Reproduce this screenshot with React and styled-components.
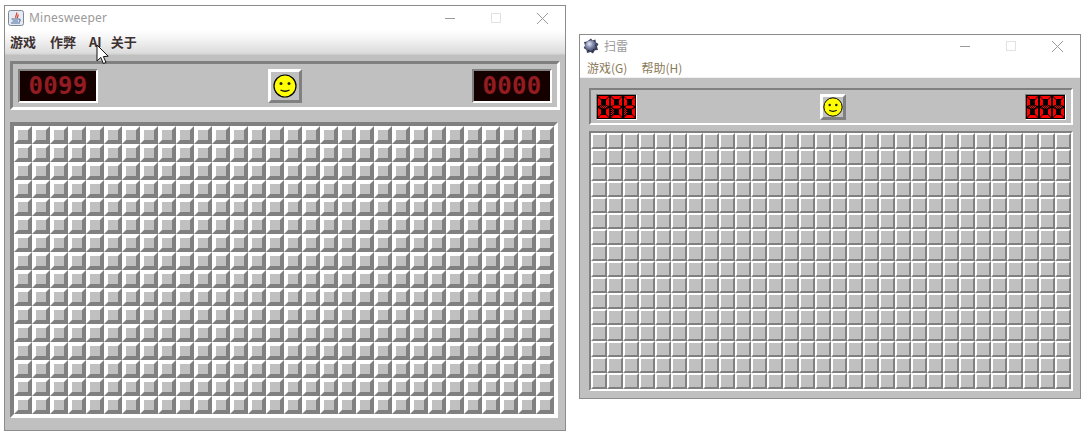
import React from 'react'
import styled, { createGlobalStyle } from 'styled-components'

const Global = createGlobalStyle`
  html, body { margin: 0; padding: 0; background: #fff; }
  body { width: 1085px; height: 436px; overflow: hidden; font-family: "Liberation Sans", "Noto Sans CJK SC", sans-serif; }
`

const Page = styled.div`
  position: relative;
  display: flex;
  align-items: flex-start;
  gap: 13px;
  padding-left: 4px;
  width: 1085px;
  height: 436px;
  box-sizing: border-box;
`

const Window = styled.div`
  box-sizing: border-box;
  width: ${p => p.$w}px;
  height: ${p => p.$h}px;
  margin-top: ${p => p.$top}px;
  border: 1px solid #8c8c8c;
  background: #c0c0c0;
  display: flex;
  flex-direction: column;
`

const TitleBar = styled.div`
  box-sizing: border-box;
  height: ${p => p.$h}px;
  padding: 0 0 ${p => p.$lift}px 3px;
  background: #fff;
  display: flex;
  align-items: center;
  flex-shrink: 0;
`

const AppIcon = styled.svg`
  width: 16px;
  height: 16px;
  flex-shrink: 0;
`

const Title = styled.span`
  margin: 0 0 ${p => p.$cjk ? 0 : 2}px 5px;
  font-family: ${p => p.$cjk ? '"Noto Sans CJK SC", sans-serif' : '"Noto Sans", sans-serif'};
  font-size: 12px;
  letter-spacing: ${p => p.$cjk ? 0 : '0.2px'};
  color: #9a9a9a;
`

const Controls = styled.div`
  margin-left: auto;
  display: flex;
  align-items: center;
`

const Ctl = styled.svg`
  width: 46px;
  height: 14px;
  stroke: ${p => p.$dim ? '#e2e2e2' : '#9b9b9b'};
  fill: none;
`

const JavaMenu = styled.div`
  box-sizing: border-box;
  height: 25px;
  padding: 0 0 2px 5px;
  flex-shrink: 0;
  display: flex;
  align-items: center;
  gap: 14px;
  background: linear-gradient(#ffffff, #f4f4f4 35%, #dcdcdc 92%, #c8c8c8);
`

const JavaMenuItem = styled.span`
  font-family: "Noto Sans CJK SC", sans-serif;
  font-size: 13px;
  font-weight: 700;
  color: #3c3030;
  margin-left: ${p => p.$ml || 0}px;
`

const WinMenu = styled.div`
  box-sizing: border-box;
  height: 18px;
  padding: 0 0 2px 7px;
  flex-shrink: 0;
  display: flex;
  align-items: center;
  gap: 14px;
  background: #fff;
  border-bottom: 1px solid #f0f0f0;
`

const WinMenuItem = styled.span`
  font-family: "Noto Sans CJK SC", sans-serif;
  font-size: 12px;
  color: #8a7a58;
`

const Body = styled.div`
  flex: 1;
  display: flex;
  flex-direction: column;
  gap: ${p => p.$gap}px;
  padding: ${p => p.$pad};
`

const Bevel = styled.div`
  box-sizing: border-box;
  border-style: solid;
  border-width: ${p => p.$bw}px;
  border-color: #808080 #ffffff #ffffff #808080;
`

const Panel = styled(Bevel)`
  height: ${p => p.$h}px;
  display: flex;
  align-items: center;
  justify-content: space-between;
  padding: 0 ${p => p.$pad}px;
`

const JavaCounter = styled(Bevel)`
  width: 80px;
  height: 34px;
  background: #150000;
  color: #931c22;
  font-family: "DejaVu Sans Mono", monospace;
  font-weight: 700;
  font-size: 24px;
  letter-spacing: 0.3px;
  display: flex;
  align-items: center;
  justify-content: center;
`

const LedBox = styled.svg`
  display: block;
  box-sizing: border-box;
  width: 41px;
  height: 26px;
  border: 1px solid;
  border-color: #808080 #fff #fff #808080;
`

const SmileButton = styled.div`
  box-sizing: border-box;
  width: ${p => p.$size}px;
  height: ${p => p.$size}px;
  margin-left: ${p => p.$shift || 0}px;
  background: #c0c0c0;
  border-style: solid;
  border-width: 3px;
  border-color: #ffffff #808080 #808080 #ffffff;
  display: flex;
  align-items: center;
  justify-content: center;
`

const Grid = styled(Bevel)`
  display: grid;
  grid-template-columns: repeat(30, ${p => p.$cell}px);
  grid-auto-rows: ${p => p.$cell}px;
  width: max-content;
`

const JavaCell = styled.div`
  box-sizing: border-box;
  border-style: solid;
  border-width: 4px;
  border-color: #ffffff #808080 #808080 #ffffff;
  background: #c0c0c0;
`

const WinCell = styled.div`
  box-sizing: border-box;
  border-style: solid;
  border-width: 2px;
  border-color: #ffffff #808080 #808080 #ffffff;
  background: #c0c0c0;
`

const Cursor = styled.svg`
  position: absolute;
  left: 96px;
  top: 44px;
  width: 13px;
  height: 21px;
`

const Smiley = ({ size }) => (
  <svg width={size} height={size} viewBox="0 0 24 24">
    <circle cx="12" cy="12" r="11" fill="#ffff00" stroke="#000" strokeWidth="1.2" />
    <circle cx="8" cy="9.5" r="1.5" fill="#222" />
    <circle cx="16" cy="9.5" r="1.5" fill="#222" />
    <path d="M7.5 16 Q12 18.5 16.5 16" fill="none" stroke="#111" strokeWidth="1.4" />
  </svg>
)

const SEG = {
  a: '1,1 12,1 9,4 4,4',
  b: '12,2 9,5 9,10 12,11',
  c: '12,13 9,14.5 9,19 12,22',
  d: '1,23 12,23 9,20 4,20',
  e: '1,13 4,14.5 4,19 1,22',
  f: '1,2 4,5 4,10 1,11',
  g: '2,12 4,10.5 9,10.5 11,12 9,13.5 4,13.5',
}

const LedDigit = ({ x, hatch, pat }) => (
  <g transform={`translate(${x} 0)`}>
    {Object.keys(SEG).map(k => (
      <polygon key={k} points={SEG[k]} fill={hatch.includes(k) ? `url(#${pat})` : '#ff0000'} />
    ))}
  </g>
)

const Led = ({ id, digits }) => (
  <LedBox viewBox="0 0 39 24">
    <defs>
      <pattern id={id} width="2" height="2" patternUnits="userSpaceOnUse">
        <rect width="2" height="2" fill="#000" />
        <rect width="1" height="1" fill="#ff0000" />
        <rect x="1" y="1" width="1" height="1" fill="#ff0000" />
      </pattern>
    </defs>
    <rect width="39" height="24" fill="#000" />
    {digits.map((h, i) => <LedDigit key={i} x={i * 13} hatch={h} pat={id} />)}
  </LedBox>
)

const JavaIcon = () => (
  <AppIcon viewBox="0 0 16 16">
    <rect x="0.5" y="0.5" width="15" height="15" rx="2" fill="#e6eaf2" stroke="#7d8796" />
    <path d="M8.5 2.5 C10 4.5 6.5 5.5 8 8 M10 4.5 C10.5 6 9 6.5 9.5 8" stroke="#d8402a" strokeWidth="1.2" fill="none" />
    <path d="M3.5 9 H11 M4.5 11 H10 M3 13 H12 M11 9 Q13.5 10 11 11.5" stroke="#4a6a9a" strokeWidth="1.1" fill="none" />
  </AppIcon>
)

const MineIcon = () => (
  <AppIcon viewBox="0 0 16 16">
    <defs>
      <radialGradient id="mine-ball" cx="0.38" cy="0.32" r="0.75">
        <stop offset="0" stopColor="#e4e8f4" />
        <stop offset="0.45" stopColor="#7d86ac" />
        <stop offset="1" stopColor="#2c3048" />
      </radialGradient>
    </defs>
    <path d="M8 0.5 L9.5 2.5 L12.5 1.5 L12.8 4.2 L15.5 6 L14 8.5 L15 12 L11.8 12.2 L10 15.5 L7.5 14 L4 15 L3.5 12 L0.7 10 L2 7.5 L1 4 L4 3.5 Z" fill="#3a3e58" />
    <circle cx="7.8" cy="8" r="5.8" fill="url(#mine-ball)" />
    <path d="M5 12 l1 1 M10 11 l1 1 M12 7 l1 0.5 M9 12.5 l0.5 1" stroke="#24283c" strokeWidth="1" />
  </AppIcon>
)

const WindowControls = () => (
  <Controls>
    <Ctl viewBox="0 0 46 14"><path d="M18 7.5 H28" /></Ctl>
    <Ctl viewBox="0 0 46 14" $dim><rect x="18.5" y="2.5" width="9" height="9" /></Ctl>
    <Ctl viewBox="0 0 46 14"><path d="M18 2 L29 13 M29 2 L18 13" /></Ctl>
  </Controls>
)

const cells = Array.from({ length: 480 })

export default function App() {
  return (
    <Page>
      <Global />
      <Window $w={562} $h={426} $top={5}>
        <TitleBar $h={24} $lift={0}>
          <JavaIcon />
          <Title>Minesweeper</Title>
          <WindowControls />
        </TitleBar>
        <JavaMenu>
          <JavaMenuItem>游戏</JavaMenuItem>
          <JavaMenuItem>作弊</JavaMenuItem>
          <JavaMenuItem $ml={-1}>AI</JavaMenuItem>
          <JavaMenuItem $ml={-5}>关于</JavaMenuItem>
        </JavaMenu>
        <Body $gap={12} $pad="6px 5px 0">
          <Panel $bw={3} $h={49} $pad={5}>
            <JavaCounter $bw={2}>0099</JavaCounter>
            <SmileButton $size={34}><Smiley size={24} /></SmileButton>
            <JavaCounter $bw={2}>0000</JavaCounter>
          </Panel>
          <Grid $bw={4} $cell={18}>
            {cells.map((_, i) => <JavaCell key={i} />)}
          </Grid>
        </Body>
      </Window>
      <Window $w={502} $h={365} $top={34}>
        <TitleBar $h={25} $lift={4}>
          <MineIcon />
          <Title $cjk>扫雷</Title>
          <WindowControls />
        </TitleBar>
        <WinMenu>
          <WinMenuItem>游戏(G)</WinMenuItem>
          <WinMenuItem>帮助(H)</WinMenuItem>
        </WinMenu>
        <Body $gap={6} $pad="10px 7px 0 9px">
          <Panel $bw={2} $h={37} $pad={5}>
            <Led id="led-left" digits={['g', 'e', 'e']} />
            <SmileButton $size={26} $shift={4}><Smiley size={20} /></SmileButton>
            <Led id="led-right" digits={['g', 'g', 'g']} />
          </Panel>
          <Grid $bw={2} $cell={16}>
            {cells.map((_, i) => <WinCell key={i} />)}
          </Grid>
        </Body>
      </Window>
      <Cursor viewBox="0 0 13 21">
        <path d="M1 1 V17 L4.8 13.4 L7.4 19.6 L10 18.4 L7.4 12.6 L12.2 12.2 Z" fill="#fff" stroke="#111" strokeWidth="1" />
      </Cursor>
    </Page>
  )
}
